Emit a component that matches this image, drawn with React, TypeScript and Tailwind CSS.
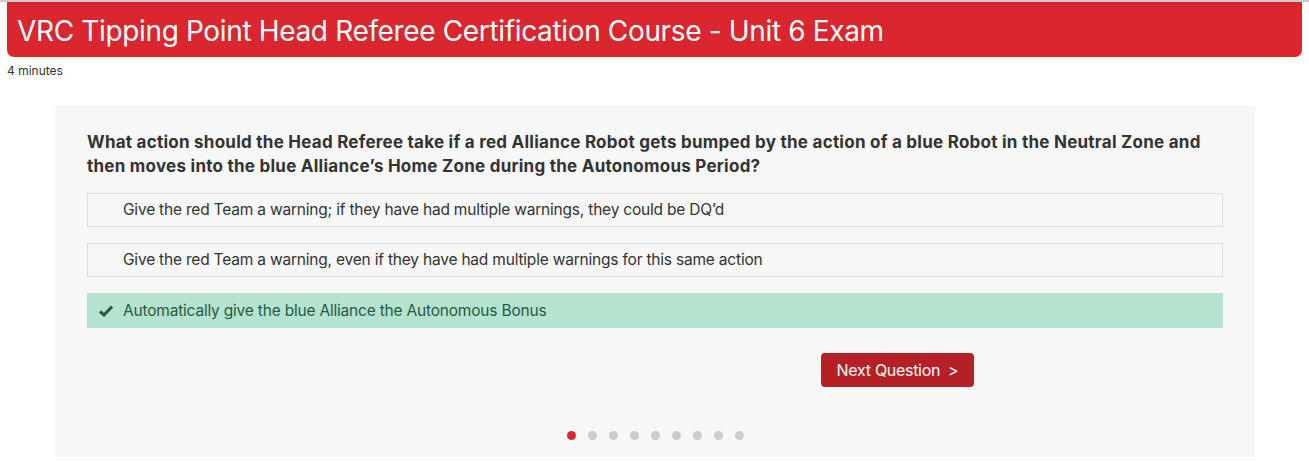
const options = [
  { text: "Give the red Team a warning; if they have had multiple warnings, they could be DQ\u2019d", correct: false },
  { text: "Give the red Team a warning, even if they have had multiple warnings for this same action", correct: false },
  { text: "Automatically give the blue Alliance the Autonomous Bonus", correct: true },
];

export default function App() {
  return (
    <div className="min-h-[461px] bg-white border-t-2 border-[#cccccc] font-['Inter',sans-serif] text-[#333]">
      {/* HEADER */}
      <div className="px-[7px]">
        <div className="h-[55px] bg-[#d9262f] rounded-b-[7px] flex items-center px-[10px] pt-[2px]">
          <h1 className="text-[28px] text-white leading-none tracking-[-0.35px]">
            VRC Tipping Point Head Referee Certification Course - Unit 6 Exam
          </h1>
        </div>
        <div className="text-[12px] mt-[5px] text-[#333]">4 minutes</div>
      </div>

      {/* QUIZ PANEL */}
      <div className="mx-[55px] mt-[25px] w-[1200px] bg-[#f7f7f7] px-[32px] pt-[25px] pb-[17px]">
        <h2 className="text-[17px] font-bold leading-[24px] text-[#333] tracking-[0.25px]">
          What action should the Head Referee take if a red Alliance Robot gets bumped by the action of a blue Robot in the
          Neutral Zone and then moves into the blue Alliance’s Home Zone during the Autonomous Period?
        </h2>

        <div className="mt-[15px] flex flex-col gap-[16px] w-[1136px]">
          {options.map((o) => (
            <div
              key={o.text}
              className={`flex items-center text-[15.5px] tracking-[-0.2px] ${
                o.correct ? "h-[35px] bg-[#b4e3d0] text-[#2a5a44]" : "h-[34px] border border-[#dddddd] text-[#333]"
              }`}
            >
              <span className={`${o.correct ? "w-[36px]" : "w-[35px]"} flex justify-center pl-[2px]`}>
                {o.correct && (
                  <svg width="14" height="12" viewBox="0 0 14 12">
                    <path d="M1 6.5 L5 10 L13 1.5" stroke="#2a5a44" strokeWidth="3" fill="none" />
                  </svg>
                )}
              </span>
              {o.text}
            </div>
          ))}
        </div>

        <div className="mt-[25px] pl-[734px]">
          <button className="h-[34px] w-[153px] bg-[#b71f27] rounded-[4px] text-white text-[16px] tracking-[-0.3px] flex items-center justify-center gap-[8px]">
            <span>Next Question</span>
            <span>&gt;</span>
          </button>
        </div>

        <div className="mt-[44px] flex justify-center gap-[12px]">
          {Array.from({ length: 9 }).map((_, i) => (
            <span
              key={i}
              className={`w-[9px] h-[9px] rounded-full ${i === 0 ? "bg-[#d9262f]" : "bg-[#cccccc]"}`}
            />
          ))}
        </div>
      </div>
    </div>
  );
}
